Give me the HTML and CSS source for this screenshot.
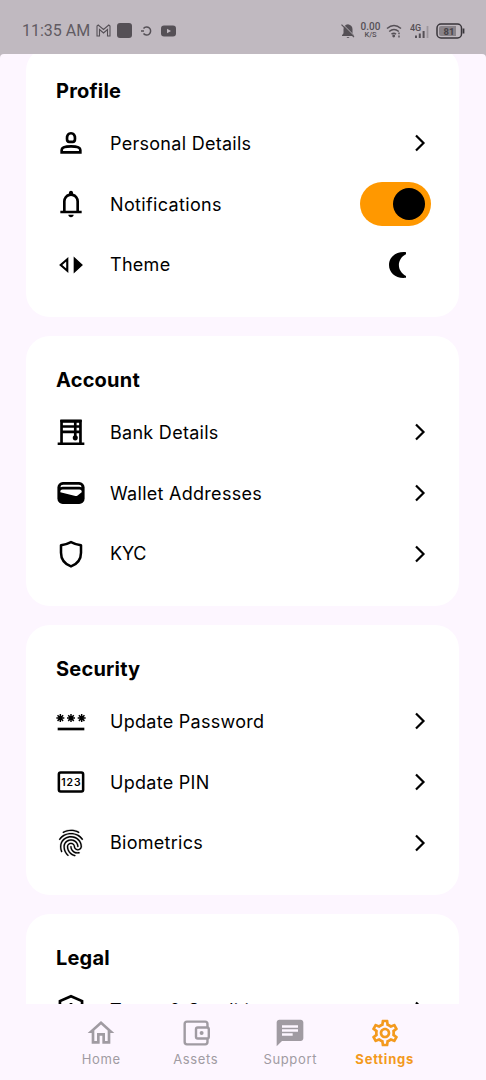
FILE: index.html
```html
<!DOCTYPE html>
<html lang="en">
<head>
<meta charset="utf-8">
<title>Settings</title>
<link rel="stylesheet" href="styles.css">
</head>
<body>
<svg class="defs" width="0" height="0">
  <symbol id="chevron" viewBox="0 0 12 18"><path d="M2 1.500 9.500 9 2 16.500" fill="none" stroke="currentColor" stroke-width="2.200"/></symbol>
</svg>
<div class="screen">
  <header class="status">
    <div class="status-left">
      <span class="clock">11:35 AM</span>
      <svg class="s-mail" width="15" height="13" viewBox="0 0 15 13"><path d="M1 12V2l1.200-1L7.500 5.500 12.800 1 14 2v10h-2.500V5.500l-4 3.500-4-3.500V12z" fill="none" stroke="currentColor" stroke-width="1.100"/></svg>
      <svg class="s-square" width="15" height="15" viewBox="0 0 15 15"><rect width="15" height="15" rx="3" fill="currentColor"/></svg>
      <svg class="s-ring" width="11" height="10" viewBox="0 0 11 10"><path d="M2.500 2.500A4 4 0 1 1 2.500 7.500M0 5h3" fill="none" stroke="currentColor" stroke-width="1.500"/></svg>
      <svg class="s-video" width="15" height="12" viewBox="0 0 15 12"><rect width="15" height="11" y=".5" rx="3" fill="currentColor"/><path d="m6 3.800 4 2.200-4 2.200z" fill="#c0b9c0"/></svg>
    </div>
    <div class="status-right">
      <svg width="14" height="16" viewBox="0 0 14 16"><path d="M7 1.200c3 .5 4.500 2.500 4.500 5v4l1.500 2V13H1v-.8l1.500-2v-4C2.500 3.500 4 1.700 7 1.200zM5.500 14h3q-1.500 2-3 0z" fill="currentColor"/><path d="M1.500 1 14 13.500" stroke="#c0b9c0" stroke-width="1"/><path d="m.5 1.700 12.500 12.500" stroke="currentColor" stroke-width="1.200"/></svg>
      <span class="speed"><b>0.00</b><i>K/S</i></span>
      <svg class="s-wifi" width="16" height="14" viewBox="0 0 16 14"><path d="M1 4.500q7-6 14 0M3.200 7.500q4.800-4 9.600 0M5.500 10.200q2.500-2 4.500 0" fill="none" stroke="currentColor" stroke-width="1.500"/><circle cx="7.700" cy="12" r="1.400" fill="currentColor"/><path d="M13 8.500v1.800M13 11.500v2" stroke="currentColor" stroke-width="1.400"/></svg>
      <svg class="s-cell" width="20" height="16" viewBox="0 0 20 16"><text x="0" y="8" class="cell-label">4G</text><path d="M6 15v-2.500M9.800 15v-4.500M13.600 15V8" stroke="currentColor" stroke-width="2"/><path d="M17.500 15V3" stroke="#9c969c" stroke-width="1.800"/></svg>
      <svg class="s-battery" width="29" height="16" viewBox="0 0 29 16"><rect x="1" y="1" width="24.500" height="14" rx="4" fill="#c0b9c0" stroke="#38353a" stroke-width="1.500"/><path d="M5 3h15v10H5q-2 0-2-2V5q0-2 2-2" fill="#898389"/><path d="M27.500 5.500v5" stroke="#38353a" stroke-width="1.800"/><text x="7.500" y="11.500" class="battery-label">81</text></svg>
    </div>
  </header>

  <main class="content">
    <section class="card">
      <h2>Profile</h2>
      <div class="row"><svg class="icon" viewBox="0 0 24 24"><g fill="none" stroke="currentColor" stroke-width="2"><path d="M12 4.700c2.200 0 3 1.500 3 3.900 0 1.600-.8 2.600-1.600 2.600h-2.800c-.8 0-1.600-1-1.600-2.600C9 6.200 9.800 4.700 12 4.700z"/><path d="M5 19v-1.700C5 15.500 8 14.500 12 14.500s7 1 7 2.800V19z"/></g></svg><span>Personal Details</span><svg class="chevron"><use href="#chevron"/></svg></div>
      <div class="row"><svg class="icon" viewBox="0 0 24 24"><path d="M4 19v-2h2v-7q0-2.080 1.250-3.690T10.500 4.200v-.7q0-.63.440-1.060T12 2t1.060.44.440 1.060v.7q2 .5 3.250 2.110T18 10v7h2v2zm8 3q-.83 0-1.410-.59T10 20h4q0 .83-.59 1.410T12 22zm-4-5h8v-7q0-1.650-1.180-2.830T12 6 9.180 7.170 8 10z" fill="currentColor"/></svg><span class="tight">Notifications</span><div class="toggle"><i></i></div></div>
      <div class="row"><svg class="icon" viewBox="0 0 24 24"><path d="M9.200 7.700v8.600L4.300 12z" fill="none" stroke="currentColor" stroke-width="1.600"/><path d="M14.500 17.200V6.800l5.700 5.200z" fill="currentColor" stroke="currentColor" stroke-width="1"/></svg><span>Theme</span><svg class="moon" viewBox="0 0 20 28"><path d="M18 1.200C8 .2 1 6 1 14s7 14 17 12.800v-1.900C8.500 20 8.500 8 18 3.200z" fill="currentColor"/></svg></div>
    </section>

    <section class="card">
      <h2>Account</h2>
      <div class="row"><svg class="icon" viewBox="0 0 24 24"><path d="M2 20.800h20M4.900 21V4h14.200v17M5 7.900h14M5 11.900h14M15.200 4v13" fill="none" stroke="currentColor" stroke-width="2"/><path d="M4 2.600h16v2H4z" fill="currentColor"/><circle cx="15.200" cy="16.400" r="1.900" fill="currentColor"/></svg><span>Bank Details</span><svg class="chevron"><use href="#chevron"/></svg></div>
      <div class="row"><svg class="icon" viewBox="0 0 24 24"><rect x="1.800" y="3.800" width="20.400" height="16.400" rx="4" fill="currentColor"/><path d="M4.200 7.700v-.2q0-1.700 2-1.700h11.600q2 0 2 1.700v.2q-.6-.3-1.500-.3H5.700q-.9 0-1.500.3zM4 11.500V10.600q0-1.300 1.600-1.300h12.800q1.600 0 1.600 1.300v.9l-3.300 2.500q-.6.400-1.400.2z" fill="#fff"/></svg><span>Wallet Addresses</span><svg class="chevron"><use href="#chevron"/></svg></div>
      <div class="row"><svg class="icon" viewBox="0 0 24 24"><path d="M12 3.100Q15.500 4.900 19.500 5.500V11c0 4.800-2.900 8.500-7.500 10.300C7.400 19.500 4.500 15.800 4.500 11V5.500Q8.500 4.900 12 3.100z" fill="none" stroke="currentColor" stroke-width="1.900" stroke-linejoin="round"/></svg><span class="snug">KYC</span><svg class="chevron"><use href="#chevron"/></svg></div>
    </section>

    <section class="card">
      <h2>Security</h2>
      <div class="row"><svg class="icon" viewBox="0 0 24 24"><path d="M2 17h20v2H2z" fill="currentColor"/><path d="M4 6.800v6M1 9.800h6M1.900 7.700l4.200 4.200M6.100 7.700l-4.200 4.200M12 6.800v6M9 9.800h6M9.900 7.700l4.200 4.200M14.100 7.700l-4.200 4.200M20 6.800v6M17 9.800h6M17.900 7.700l4.200 4.200M22.100 7.700l-4.200 4.200" stroke="currentColor" stroke-width="1.100"/></svg><span>Update Password</span><svg class="chevron"><use href="#chevron"/></svg></div>
      <div class="row"><svg class="icon" viewBox="0 0 24 24"><rect x="2.900" y="4.900" width="18.200" height="14.200" rx="1.300" fill="none" stroke="currentColor" stroke-width="1.900"/><text x="12.300" y="14.800" text-anchor="middle" class="pin-label">123</text></svg><span>Update PIN</span><svg class="chevron"><use href="#chevron"/></svg></div>
      <div class="row"><svg class="icon" viewBox="0 0 24 24"><path fill="currentColor" stroke="currentColor" stroke-width=".15" d="M17.810 4.470c-.08 0-.16-.02-.23-.06C15.660 3.420 14 3 12.010 3c-1.980 0-3.860.47-5.570 1.410-.24.13-.54.04-.68-.2-.13-.24-.04-.55.2-.68C7.820 2.520 9.860 2 12.010 2c2.130 0 3.990.47 6.030 1.520.25.13.34.43.21.67-.09.18-.26.28-.44.28zM3.500 9.720c-.1 0-.2-.03-.29-.09-.23-.16-.28-.47-.12-.7.990-1.400 2.250-2.500 3.750-3.270C9.980 4.040 14 4.030 17.150 5.650c1.500.77 2.760 1.860 3.750 3.250.16.22.11.54-.12.7-.23.16-.54.11-.7-.12-.9-1.260-2.040-2.250-3.390-2.940-2.870-1.470-6.540-1.470-9.400.01-1.360.7-2.500 1.700-3.400 2.960-.08.14-.23.210-.39.210zm6.250 12.070c-.13 0-.26-.05-.35-.15-.87-.87-1.340-1.430-2.010-2.640-.69-1.230-1.050-2.730-1.050-4.340 0-2.970 2.540-5.390 5.660-5.390s5.660 2.420 5.660 5.390c0 .28-.22.5-.5.5s-.5-.22-.5-.5c0-2.420-2.090-4.390-4.660-4.390s-4.660 1.970-4.660 4.390c0 1.440.32 2.770.93 3.850.64 1.150 1.080 1.640 1.850 2.420.19.200.19.510 0 .71-.11.100-.24.150-.37.150zm7.170-1.850c-1.190 0-2.240-.3-3.100-.89-1.490-1.010-2.380-2.650-2.380-4.390 0-.28.22-.5.5-.5s.5.220.5.500c0 1.410.72 2.740 1.940 3.560.71.480 1.540.71 2.540.71.240 0 .64-.03 1.040-.1.270-.05.530.130.580.410.050.270-.13.530-.41.580-.57.110-1.070.120-1.210.120zM14.910 22c-.04 0-.09-.01-.13-.02-1.590-.44-2.630-1.030-3.720-2.100-1.400-1.390-2.170-3.240-2.170-5.220 0-1.620 1.380-2.940 3.080-2.940s3.080 1.320 3.080 2.940c0 1.070.93 1.940 2.080 1.940s2.080-.87 2.080-1.940c0-3.770-3.250-6.830-7.250-6.830-2.840 0-5.440 1.580-6.610 4.030-.39.810-.59 1.760-.59 2.800 0 .78.070 2.010.67 3.610.1.260-.03.550-.29.640-.26.100-.55-.04-.64-.29-.49-1.310-.73-2.610-.73-3.960 0-1.200.23-2.290.68-3.240 1.330-2.790 4.280-4.600 7.510-4.600 4.550 0 8.250 3.510 8.250 7.830 0 1.620-1.380 2.940-3.080 2.940s-3.080-1.320-3.080-2.940c0-1.070-.93-1.940-2.080-1.940s-2.080.87-2.080 1.940c0 1.710.66 3.310 1.870 4.510.95.940 1.860 1.460 3.270 1.850.27.070.42.350.35.610-.05.230-.26.380-.47.380z"/></svg><span>Biometrics</span><svg class="chevron"><use href="#chevron"/></svg></div>
    </section>

    <section class="card">
      <h2>Legal</h2>
      <div class="row"><svg class="icon" viewBox="0 0 24 24"><path d="M12 1.700 20.300 5.300v5.900c0 4.600-3.500 8.700-8.300 10.300-4.800-1.600-8.300-5.700-8.300-10.300V5.300zM12 6.700v2M12 11v6" fill="none" stroke="currentColor" stroke-width="2"/></svg><span>Terms &amp; Conditions</span><svg class="chevron"><use href="#chevron"/></svg></div>
    </section>
  </main>

  <nav class="tabs">
    <div class="tab"><svg viewBox="0 0 24 24"><path d="M12 5.690l5 4.500V18h-2v-6H9v6H7v-7.810l5-4.500M12 3L2 12h3v8h6v-6h2v6h6v-8h3z" fill="currentColor"/></svg><span>Home</span></div>
    <div class="tab"><svg viewBox="0 0 24 24"><g fill="none" stroke="currentColor" stroke-width="1.800"><path d="M20.600 8V5.200q0-1.700-1.700-1.700H5.200q-1.700 0-1.700 1.700v13.600q0 1.700 1.700 1.700h13.700q1.700 0 1.700-1.700V16"/><rect x="12" y="7.900" width="9.600" height="8.200" rx="1.300"/></g><circle cx="16.200" cy="12" r="1.500" fill="currentColor"/></svg><span>Assets</span></div>
    <div class="tab"><svg viewBox="0 0 24 24"><path d="M20 2H4c-1.100 0-2 .9-2 2v18l4-4h14c1.100 0 2-.9 2-2V4c0-1.100-.9-2-2-2zM6 6.200h12v1.800H6zm8 7.800H6v-1.800h8zm4-3H6V9.200h12z" fill="currentColor"/></svg><span>Support</span></div>
    <div class="tab active"><svg viewBox="0 0 24 24"><path d="M19.430 12.980c.04-.32.070-.64.070-.98s-.03-.66-.07-.98l2.110-1.650c.19-.15.240-.42.120-.64l-2-3.460c-.09-.16-.26-.25-.44-.25-.06 0-.12.010-.17.030l-2.490 1c-.52-.4-1.080-.73-1.690-.98l-.38-2.650C14.460 2.180 14.250 2 14 2h-4c-.25 0-.46.180-.49.420l-.38 2.650c-.61.250-1.170.590-1.690.980l-2.490-1c-.06-.02-.12-.03-.18-.03-.17 0-.34.090-.43.250l-2 3.460c-.13.220-.07.490.12.640l2.110 1.650c-.04.320-.07.650-.07.980s.03.660.07.980l-2.110 1.650c-.19.150-.24.420-.12.640l2 3.460c.09.160.26.250.44.250.06 0 .12-.01.17-.03l2.490-1c.52.400 1.080.730 1.690.980l.38 2.650c.03.240.24.420.49.420h4c.25 0 .46-.18.49-.42l.38-2.650c.61-.25 1.170-.59 1.690-.98l2.490 1c.06.020.12.030.18.030.17 0 .34-.09.43-.25l2-3.460c.12-.22.070-.49-.12-.64zm-1.980-1.710c.04.310.05.520.05.730s-.02.430-.05.730l-.14 1.130.89.700 1.080.84-.7 1.210-1.270-.51-1.040-.42-.9.680c-.43.320-.84.560-1.250.730l-1.060.43-.16 1.130-.2 1.350h-1.400l-.19-1.350-.16-1.130-1.060-.43c-.43-.18-.83-.41-1.230-.71l-.91-.7-1.060.43-1.270.51-.7-1.210 1.080-.84.890-.7-.14-1.130c-.03-.31-.05-.54-.05-.74s.02-.43.050-.73l.14-1.130-.89-.7-1.080-.84.7-1.210 1.270.51 1.040.42.900-.68c.43-.32.840-.56 1.250-.73l1.060-.43.160-1.130.2-1.350h1.390l.19 1.350.16 1.130 1.060.43c.43.180.83.410 1.230.71l.91.700 1.060-.43 1.270-.51.7 1.210-1.070.85-.89.700zM12 8c-2.210 0-4 1.790-4 4s1.790 4 4 4 4-1.790 4-4-1.790-4-4-4zm0 6c-1.100 0-2-.9-2-2s.9-2 2-2 2 .9 2 2-.9 2-2 2z" fill="currentColor"/></svg><span>Settings</span></div>
  </nav>
</div>
</body>
</html>
```
FILE: styles.css
```css
* { box-sizing: border-box; }
body { margin: 0; background: #c0b9c0; font-family: Inter, sans-serif; color: #000; }
svg { display: block; flex: none; }
.defs { position: absolute; }

.screen { display: flex; flex-direction: column; width: 486px; height: 1080px; overflow: hidden; }

.status { height: 54px; flex: none; display: flex; justify-content: space-between; align-items: center; padding: 7px 21px 0 22px; color: #555056; font-family: Roboto, sans-serif; }
.status-left, .status-right { display: flex; align-items: center; }
.clock { width: 74px; font-size: 16px; white-space: nowrap; color: #615b62; }
.s-square { margin-left: 6px; }
.s-ring { margin-left: 9px; }
.s-video { margin-left: 9px; }
.speed { display: flex; flex-direction: column; align-items: center; width: 19px; margin-left: 6px; line-height: 8px; }
.speed b { font-size: 10px; font-weight: 500; }
.speed i { font-size: 7.500px; font-style: normal; font-weight: 500; }
.s-wifi { margin-left: 6px; }
.s-cell { margin-left: 8px; }
.s-battery { margin-left: 6px; }
.cell-label { font: 500 9px Roboto, sans-serif; fill: currentColor; }
.battery-label { font: 700 9.500px Roboto, sans-serif; fill: #474247; }

.content { flex: 1; min-height: 0; overflow: hidden; display: flex; flex-direction: column; gap: 19px; padding: 0 27px 0 26px; background: #fdf6ff; border-radius: 4px 4px 0 0; }
.card { flex: none; height: 270px; padding: 30px 29px 0 29px; border-radius: 24px; background: #fff; }
.card:first-child { margin-top: -7px; }
.card h2 { margin: 0; height: 36px; padding-left: 1px; font-size: 20px; line-height: 29px; font-weight: 650; letter-spacing: .2px; }
.row { display: flex; align-items: center; height: 60.700px; font-size: 18px; letter-spacing: .28px; }
.row > span { flex: 1; margin-left: 23px; white-space: nowrap; }
.row > .tight { letter-spacing: .35px; }
.row > .snug { letter-spacing: -.2px; }
.icon { width: 32px; height: 32px; }
.chevron { width: 12px; height: 18px; margin-right: 4px; }
.toggle { width: 71px; height: 44px; margin-right: -1px; padding: 6px; border-radius: 22px; background: #ff9800; display: flex; justify-content: flex-end; }
.toggle i { width: 32px; height: 32px; border-radius: 50%; background: #000; }
.moon { width: 20px; height: 28px; margin-right: 22px; }
.pin-label { font: 600 7.800px Inter, sans-serif; letter-spacing: .7px; fill: currentColor; }

.tabs { height: 76px; flex: none; display: flex; padding: 13px 54px 0; background: #fdf6ff; }
.tab { width: 94.500px; flex: none; display: flex; flex-direction: column; align-items: center; color: #a09ba2; font-size: 13px; letter-spacing: .65px; }
.tab svg { width: 32px; height: 32px; }
.tab span { margin-top: 2px; line-height: 16px; }
.active { color: #f39a1e; }
.active span { font-weight: 700; letter-spacing: .8px; }
```
